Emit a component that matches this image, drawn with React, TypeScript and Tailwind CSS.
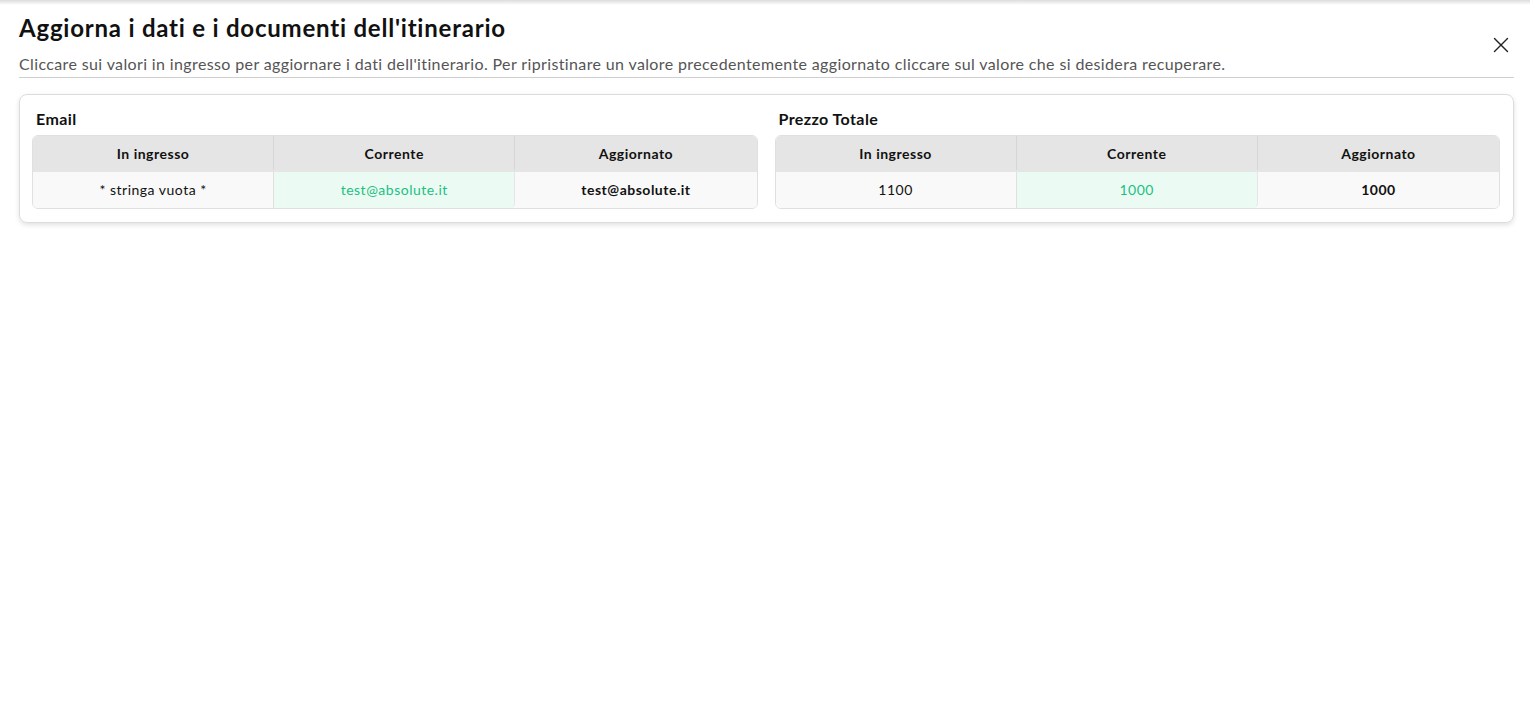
import { X } from "lucide-react";

type Field = {
  label: string;
  incoming: string;
  current: string;
  updated: string;
};

const fields: Field[] = [
  { label: "Email", incoming: "* stringa vuota *", current: "test@absolute.it", updated: "test@absolute.it" },
  { label: "Prezzo Totale", incoming: "1100", current: "1000", updated: "1000" },
];

function FieldTable({ field }: { field: Field }) {
  return (
    <div>
      <div className="pl-[4px] text-[16px] font-bold leading-[24px] tracking-[0.4px] text-[#111] mb-[4px]">
        {field.label}
      </div>
      <div className="rounded-[6px] border border-[#e0e0e0] overflow-hidden text-[14px] tracking-[0.5px]">
        {/* header */}
        <div className="grid grid-cols-3 bg-[#e5e5e5] h-[36px] pb-[2px] items-stretch font-bold text-[#111]">
          <div className="flex items-center justify-center border-r border-[#d6d6d6]">In ingresso</div>
          <div className="flex items-center justify-center border-r border-[#d6d6d6]">Corrente</div>
          <div className="flex items-center justify-center">Aggiornato</div>
        </div>
        {/* values */}
        <div className="grid grid-cols-3 bg-[#f9f9f9] h-[36px] items-stretch">
          <div className="flex items-center justify-center pb-[2px] text-[#111] border-r border-[#e0e0e0]">
            {field.incoming}
          </div>
          <div className="flex items-center justify-center pb-[2px] bg-[#ebfbf3] text-[#22bf83] rounded-br-[5px] border-r border-[#e6e6e6]">
            {field.current}
          </div>
          <div className="flex items-center justify-center pb-[2px] font-bold text-[#111]">{field.updated}</div>
        </div>
      </div>
    </div>
  );
}

export default function App() {
  return (
    <div className="min-h-screen bg-white" style={{ fontFamily: "Lato, 'Noto Sans', sans-serif" }}>
      <div className="h-[5px] bg-linear-to-b from-[#dcdcdc] to-white" />

      <div className="px-[19px] pr-[16px]">
        {/* Header */}
        <div className="flex items-center justify-between border-b border-[#cfcfcf] pt-[7px]">
          <div>
            <h1 className="text-[24px] font-bold leading-[32px] tracking-[0.78px] text-[#111]">
              Aggiorna i dati e i documenti dell'itinerario
            </h1>
            <p className="text-[16px] leading-[24px] mt-[8px] tracking-[0.37px] text-[#555] pb-[1px]">
              Cliccare sui valori in ingresso per aggiornare i dati dell'itinerario. Per ripristinare un valore
              precedentemente aggiornato cliccare sul valore che si desidera recuperare.
            </p>
          </div>
          <button className="text-[#222]">
            <X size={26} strokeWidth={1.3} />
          </button>
        </div>

        {/* Card */}
        <div className="mt-[16px] rounded-[8px] border border-[#dcdcdc] shadow-[0_2px_5px_rgba(0,0,0,0.12)] px-[12px] pr-[13px] pt-[12px] pb-[13px]">
          <div className="grid grid-cols-2 gap-[17px]">
            {fields.map((f) => (
              <FieldTable key={f.label} field={f} />
            ))}
          </div>
        </div>
      </div>
    </div>
  );
}
